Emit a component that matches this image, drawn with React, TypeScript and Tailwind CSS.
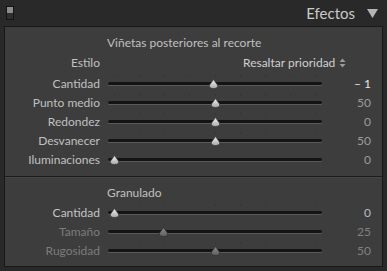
import React from "react";

const font = { fontFamily: "Lato, 'Open Sans', sans-serif" };

function Thumb({ dim }: { dim?: boolean }) {
  return (
    <svg width="11" height="10" viewBox="0 0 11 10" className="absolute" style={{ top: -4, left: -5.5 }}>
      <defs>
        <linearGradient id={dim ? "gd" : "gl"} x1="0" y1="0" x2="0" y2="1">
          <stop offset="0" stopColor={dim ? "#8a8a8a" : "#f2f2f2"} />
          <stop offset="1" stopColor={dim ? "#5e5e5e" : "#a8a8a8"} />
        </linearGradient>
      </defs>
      <path d="M5.5 0.5 L9.5 6 Q10.5 9.5 5.5 9.5 Q0.5 9.5 1.5 6 Z" fill={`url(#${dim ? "gd" : "gl"})`} stroke={dim ? "#2e2e2e" : "#3a3a3a"} strokeWidth="0.8" />
    </svg>
  );
}

function Row({
  label,
  value,
  pos,
  labelColor,
  valueColor,
  dimThumb,
  ticks,
}: {
  label: string;
  value: string;
  pos: number;
  labelColor: string;
  valueColor: string;
  dimThumb?: boolean;
  ticks?: boolean;
}) {
  return (
    <div className="flex h-[19px] items-center">
      <div className="w-[95px] text-right text-[12px] leading-none" style={{ color: labelColor }}>
        {label}
      </div>
      <div className="relative ml-[8px] h-[3px] w-[214px] rounded-full bg-[#141414] shadow-[0_1px_0_#5a5a5a]">
        {ticks && (
          <div className="absolute left-0 right-0 top-[-7px] flex justify-between px-[6px]">
            {Array.from({ length: 9 }).map((_, i) => (
              <div key={i} className="h-[2px] w-[1px] bg-[#353535]" />
            ))}
          </div>
        )}
        <div className="absolute top-[1px]" style={{ left: `${pos}%` }}>
          <Thumb dim={dimThumb} />
        </div>
      </div>
      <div className="ml-auto w-[40px] pr-[11px] text-right text-[12px] leading-none" style={{ color: valueColor }}>
        {value}
      </div>
    </div>
  );
}

export default function App() {
  return (
    <div className="relative h-[271px] w-[387px] overflow-hidden bg-[#292929]" style={font}>
      <div className="flex h-[26px] items-center pl-[6px] pr-[9px]">
        <div className="flex h-[14px] w-[8px] flex-col border border-[#141414]">
          <div className="h-[6px] bg-[#8c8c8c]" />
          <div className="flex-1 bg-[#2f2f2f]" />
        </div>
        <div className="ml-auto text-[15px] leading-none text-[#c9c9c9]">Efectos</div>
        <svg width="11" height="9" viewBox="0 0 11 9" className="ml-[12px]">
          <path d="M0 0 H11 L5.5 9 Z" fill="#b4b4b4" />
        </svg>
      </div>
      <div className="mx-[4px] h-[241px] border border-[#181818] bg-[#3d3d3d]">
        <div className="h-[149px] pt-[6px]">
          <div className="flex h-[19px] items-center pl-[102px] text-[12px] leading-none text-[#c0c0c0]">
            Viñetas posteriores al recorte
          </div>
          <div className="mt-[1px] flex h-[19px] items-center">
            <div className="w-[95px] text-right text-[12px] leading-none text-[#c0c0c0]">Estilo</div>
            <div className="ml-[143px] flex items-center text-[12px] leading-none text-[#d0d0d0]">
              Resaltar prioridad
              <svg width="7" height="10" viewBox="0 0 7 10" className="ml-[4px]">
                <path d="M3.5 0.5 L6.5 4 H0.5 Z M3.5 9.5 L6.5 6 H0.5 Z" fill="#9a9a9a" />
              </svg>
            </div>
          </div>
          <div className="mt-[2px]">
            <Row label="Cantidad" value="– 1" pos={49.5} labelColor="#c0c0c0" valueColor="#e6e6e6" ticks />
            <Row label="Punto medio" value="50" pos={50} labelColor="#c0c0c0" valueColor="#9c9c9c" ticks />
            <Row label="Redondez" value="0" pos={50} labelColor="#c0c0c0" valueColor="#9c9c9c" ticks />
            <Row label="Desvanecer" value="50" pos={50} labelColor="#c0c0c0" valueColor="#9c9c9c" ticks />
            <Row label="Iluminaciones" value="0" pos={3} labelColor="#c0c0c0" valueColor="#9c9c9c" />
          </div>
        </div>
        <div className="h-[1px] bg-[#1c1c1c]" />
        <div className="h-[1px] bg-[#474747]" />
        <div className="pt-[5px]">
          <div className="flex h-[19px] items-center pl-[102px] text-[12px] leading-none text-[#c0c0c0]">
            Granulado
          </div>
          <div className="mt-[1px]">
            <Row label="Cantidad" value="0" pos={3} labelColor="#c4c4c4" valueColor="#b4bcc4" ticks />
            <Row label="Tamaño" value="25" pos={26} labelColor="#7c7c7c" valueColor="#808080" dimThumb ticks />
            <Row label="Rugosidad" value="50" pos={50} labelColor="#7c7c7c" valueColor="#808080" dimThumb ticks />
          </div>
        </div>
      </div>
    </div>
  );
}
